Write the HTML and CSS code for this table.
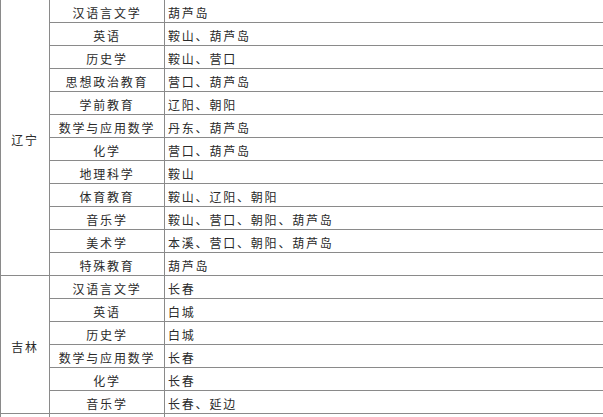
FILE: index.html
```html
<!DOCTYPE html>
<html lang="zh">
<head>
<meta charset="utf-8">
<title>专业与地区</title>
<link rel="stylesheet" href="styles.css">
</head>
<body>
<table class="grid">
  <colgroup>
    <col class="c-prov">
    <col class="c-major">
    <col class="c-city">
  </colgroup>
  <tbody>
    <tr><td class="prov" rowspan="12">辽宁</td><td class="major">汉语言文学</td><td class="city">葫芦岛</td></tr>
    <tr><td class="major">英语</td><td class="city">鞍山、葫芦岛</td></tr>
    <tr><td class="major">历史学</td><td class="city">鞍山、营口</td></tr>
    <tr><td class="major">思想政治教育</td><td class="city">营口、葫芦岛</td></tr>
    <tr><td class="major">学前教育</td><td class="city">辽阳、朝阳</td></tr>
    <tr><td class="major">数学与应用数学</td><td class="city">丹东、葫芦岛</td></tr>
    <tr><td class="major">化学</td><td class="city">营口、葫芦岛</td></tr>
    <tr><td class="major">地理科学</td><td class="city">鞍山</td></tr>
    <tr><td class="major">体育教育</td><td class="city">鞍山、辽阳、朝阳</td></tr>
    <tr><td class="major">音乐学</td><td class="city">鞍山、营口、朝阳、葫芦岛</td></tr>
    <tr><td class="major">美术学</td><td class="city">本溪、营口、朝阳、葫芦岛</td></tr>
    <tr><td class="major">特殊教育</td><td class="city">葫芦岛</td></tr>
    <tr><td class="prov" rowspan="6">吉林</td><td class="major">汉语言文学</td><td class="city">长春</td></tr>
    <tr><td class="major">英语</td><td class="city">白城</td></tr>
    <tr><td class="major">历史学</td><td class="city">白城</td></tr>
    <tr><td class="major">数学与应用数学</td><td class="city">长春</td></tr>
    <tr><td class="major">化学</td><td class="city">长春</td></tr>
    <tr><td class="major">音乐学</td><td class="city">长春、延边</td></tr>
    <tr><td class="prov"></td><td class="major"></td><td class="city"></td></tr>
  </tbody>
</table>
</body>
</html>
```
FILE: styles.css
```css
html, body {
  margin: 0;
  padding: 0;
  background: #ffffff;
  overflow: hidden;
}

body {
  width: 603px;
  height: 417px;
}

.grid {
  border-collapse: collapse;
  table-layout: fixed;
  width: 603px;
  margin-top: -1px;
  font-family: "Noto Sans CJK SC", "Noto Sans", sans-serif;
  font-size: 12px;
  letter-spacing: 1.8px;
  color: #2a2a2a;
}

.c-prov { width: 49px; }
.c-major { width: 115px; }
.c-city { width: 439px; }

.grid tr {
  height: 23px;
}

.grid td {
  border: 1px solid #8a8a8a;
  padding: 3px 0 0 0;
  line-height: 19px;
  white-space: nowrap;
  overflow: hidden;
}

.prov {
  text-align: center;
  vertical-align: middle;
  border-left-color: #c8c8c8;
}

.major {
  text-align: center;
}

.city {
  text-align: left;
  padding-left: 3px !important;
  border-right: none;
}
```
